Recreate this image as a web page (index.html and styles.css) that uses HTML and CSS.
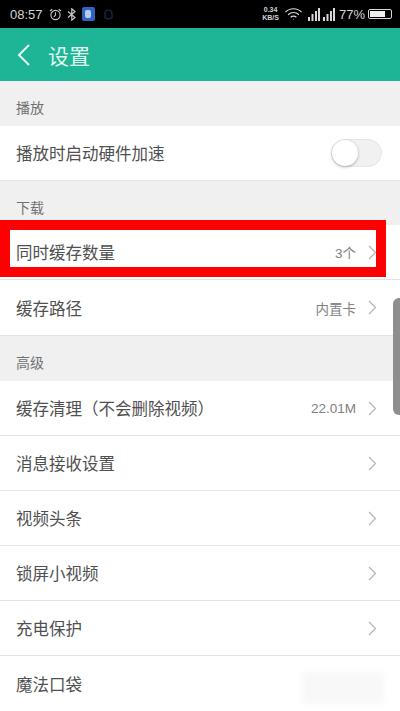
FILE: index.html
```html
<!DOCTYPE html>
<html lang="zh">
<head>
    <meta charset="UTF-8">
    <meta name="viewport" content="width=device-width, initial-scale=1.0">
    <title>设置</title>
    <link rel="stylesheet" href="styles.css">
</head>
<body>
    <div class="screen">
        <!-- Status bar -->
        <div class="status-bar">
            <div class="status-left">
                <span class="time">08:57</span>
                <svg class="status-icon" width="13" height="13" viewBox="0 0 13 13" fill="none" stroke="#c9c9c9" stroke-width="1.1"><circle cx="6.5" cy="7" r="4.6"/><path d="M6.5 4.2V7L4.8 9M1 3l2.2-1.8M12 3L9.8 1.2"/></svg>
                <svg class="status-icon" width="10" height="13" viewBox="0 0 10 13" fill="none" stroke="#c9c9c9" stroke-width="1.2"><path d="M1 3.5l7 6-3.2 2.7V.8L8 3.5l-7 6"/></svg>
                <span class="app-badge"><span class="app-badge-inner"></span></span>
                <svg class="status-icon qq-icon" width="11" height="13" viewBox="0 0 11 13" fill="none" stroke="#1c2c55" stroke-width="1.2"><path d="M2 9.5V5.5a3.5 3.5 0 0 1 7 0v4c-2 1.6-5 1.6-7 0z"/></svg>
            </div>
            <div class="status-right">
                <span class="speed">0.34<br>KB/S</span>
                <svg class="wifi-icon" width="19" height="14" viewBox="0 0 20 14" fill="none" stroke="#d8d8d8" stroke-width="1.3"><path d="M1.5 5a12 12 0 0 1 17 0M4.3 7.8a8 8 0 0 1 11.4 0M7 10.4a4.2 4.2 0 0 1 6 0"/><path d="M10 12.2v.6"/></svg>
                <svg class="signal-icon" width="12" height="15" viewBox="0 0 12 15" fill="#d8d8d8"><rect x="0" y="10" width="2" height="4"/><rect x="3.5" y="7" width="2" height="7"/><rect x="7" y="4" width="2" height="10"/><rect x="10" y="1" width="2" height="13"/></svg>
                <svg class="signal-icon" width="12" height="15" viewBox="0 0 12 15" fill="#d8d8d8"><rect x="0" y="10" width="2" height="4"/><rect x="3.5" y="7" width="2" height="7"/><rect x="7" y="4" width="2" height="10"/><rect x="10" y="1" width="2" height="13"/></svg>
                <span class="battery-text">77%</span>
                <span class="battery"><span class="battery-level"></span></span>
            </div>
        </div>

        <!-- Title bar -->
        <div class="title-bar">
            <svg class="back-icon" width="15" height="24" viewBox="0 0 15 24" fill="none" stroke="#e4f5f0" stroke-width="2"><path d="M13 2L3 12l10 10"/></svg>
            <span class="title">设置</span>
        </div>

        <div class="section-label">播放</div>
        <div class="row">
            <span class="row-name">播放时启动硬件加速</span>
            <span class="switch"><span class="switch-knob"></span></span>
        </div>

        <div class="section-label section-short">下载</div>
        <div class="row">
            <span class="row-name">同时缓存数量</span>
            <span class="row-value">3个</span>
            <svg class="chevron" width="9" height="15" viewBox="0 0 9 15" fill="none" stroke="#b4b4b4" stroke-width="1.2"><path d="M1 1l6.5 6.5L1 14"/></svg>
        </div>
        <div class="row row-tall">
            <span class="row-name">缓存路径</span>
            <span class="row-value">内置卡</span>
            <svg class="chevron" width="9" height="15" viewBox="0 0 9 15" fill="none" stroke="#b4b4b4" stroke-width="1.2"><path d="M1 1l6.5 6.5L1 14"/></svg>
        </div>

        <div class="section-label">高级</div>
        <div class="row">
            <span class="row-name">缓存清理（不会删除视频）</span>
            <span class="row-value">22.01M</span>
            <svg class="chevron" width="9" height="15" viewBox="0 0 9 15" fill="none" stroke="#b4b4b4" stroke-width="1.2"><path d="M1 1l6.5 6.5L1 14"/></svg>
        </div>
        <div class="row">
            <span class="row-name">消息接收设置</span>
            <svg class="chevron" width="9" height="15" viewBox="0 0 9 15" fill="none" stroke="#b4b4b4" stroke-width="1.2"><path d="M1 1l6.5 6.5L1 14"/></svg>
        </div>
        <div class="row">
            <span class="row-name">视频头条</span>
            <svg class="chevron" width="9" height="15" viewBox="0 0 9 15" fill="none" stroke="#b4b4b4" stroke-width="1.2"><path d="M1 1l6.5 6.5L1 14"/></svg>
        </div>
        <div class="row">
            <span class="row-name">锁屏小视频</span>
            <svg class="chevron" width="9" height="15" viewBox="0 0 9 15" fill="none" stroke="#b4b4b4" stroke-width="1.2"><path d="M1 1l6.5 6.5L1 14"/></svg>
        </div>
        <div class="row">
            <span class="row-name">充电保护</span>
            <svg class="chevron" width="9" height="15" viewBox="0 0 9 15" fill="none" stroke="#b4b4b4" stroke-width="1.2"><path d="M1 1l6.5 6.5L1 14"/></svg>
        </div>
        <div class="row row-last">
            <span class="row-name">魔法口袋</span>
        </div>

        <!-- Things lying over the list -->
        <div class="highlight"></div>
        <div class="scroll-thumb"></div>
        <div class="watermark"></div>
    </div>
</body>
</html>
```

FILE: styles.css
```css
/* General Styling */
body {
    margin: 0;
    padding: 0;
    background-color: #fff;
    font-family: "Liberation Sans", "Noto Sans CJK SC", sans-serif;
}

.screen {
    position: relative;
    width: 400px;
    height: 711px;
    overflow: hidden;
}

/* Status bar */
.status-bar {
    height: 28px;
    background-color: #000;
    color: #d4d4d4;
    display: flex;
    justify-content: space-between;
    align-items: center;
    padding: 0 8px 0 10px;
    box-sizing: border-box;
}

.status-left,
.status-right {
    display: flex;
    align-items: center;
}

.status-left {
    gap: 5px;
}

.status-right {
    gap: 3px;
}

.time {
    font-size: 13px;
    margin-right: 1px;
}

.qq-icon {
    margin-left: 3px;
}

.app-badge {
    width: 13px;
    height: 14px;
    background-color: #2f64c4;
    border-radius: 2px;
    display: flex;
    align-items: center;
    justify-content: center;
}

.app-badge-inner {
    width: 6px;
    height: 8px;
    background-color: #b9cdeb;
    border-radius: 2px;
}

.speed {
    font-size: 7px;
    line-height: 8px;
    font-weight: bold;
    text-align: center;
    margin-right: 2px;
}

.wifi-icon {
    margin-right: 2px;
}

.battery-text {
    font-size: 13px;
    margin-left: 1px;
}

.battery {
    width: 24px;
    height: 10px;
    border: 1px solid #d8d8d8;
    border-radius: 2px;
    padding: 1px;
    box-sizing: border-box;
    display: block;
}

.battery-level {
    display: block;
    width: 77%;
    height: 100%;
    background-color: #eee;
}

/* Title bar */
.title-bar {
    height: 53px;
    background-color: #1db595;
    display: flex;
    align-items: center;
    padding-left: 16px;
    gap: 17px;
}

.title {
    color: #e4f5f0;
    font-size: 21px;
}

/* List */
.section-label {
    height: 45px;
    background-color: #f0f0f0;
    color: #707070;
    font-size: 14px;
    line-height: 54px;
    padding-left: 16px;
    box-sizing: border-box;
}

.section-short {
    height: 44px;
    line-height: 54px;
}

.row {
    height: 55px;
    display: flex;
    align-items: center;
    padding: 0 23px 0 16px;
    background-color: #fff;
    border-bottom: 1px solid #e4e4e4;
    box-sizing: border-box;
}

.row-tall {
    height: 56px;
}

.row-last {
    border-bottom: none;
}

.row-name {
    flex: 1;
    color: #505050;
    font-size: 16.5px;
}

.row-value {
    color: #808080;
    font-size: 13.5px;
    margin-right: 12px;
}

.switch {
    width: 51px;
    height: 28px;
    margin-right: -5px;
    background-color: #f1f1f1;
    border: 1px solid #e6e6e6;
    border-radius: 14px;
    box-sizing: border-box;
    position: relative;
}

.switch-knob {
    position: absolute;
    left: 0;
    top: 0;
    width: 26px;
    height: 26px;
    background-color: #fff;
    border-radius: 50%;
    box-shadow: 0 1px 3px rgba(0, 0, 0, 0.3);
}

/* Overlays */
.highlight {
    position: absolute;
    left: 0;
    top: 220px;
    width: 386px;
    height: 57px;
    border: 10px solid #f00;
    box-sizing: border-box;
}

.scroll-thumb {
    position: absolute;
    right: 0;
    top: 298px;
    width: 7px;
    height: 117px;
    background-color: #8e8e8e;
    border-radius: 6px 0 0 6px;
}

.watermark {
    position: absolute;
    left: 302px;
    top: 672px;
    width: 82px;
    height: 32px;
    background-color: #f8f8f8;
    filter: blur(3px);
}
```
